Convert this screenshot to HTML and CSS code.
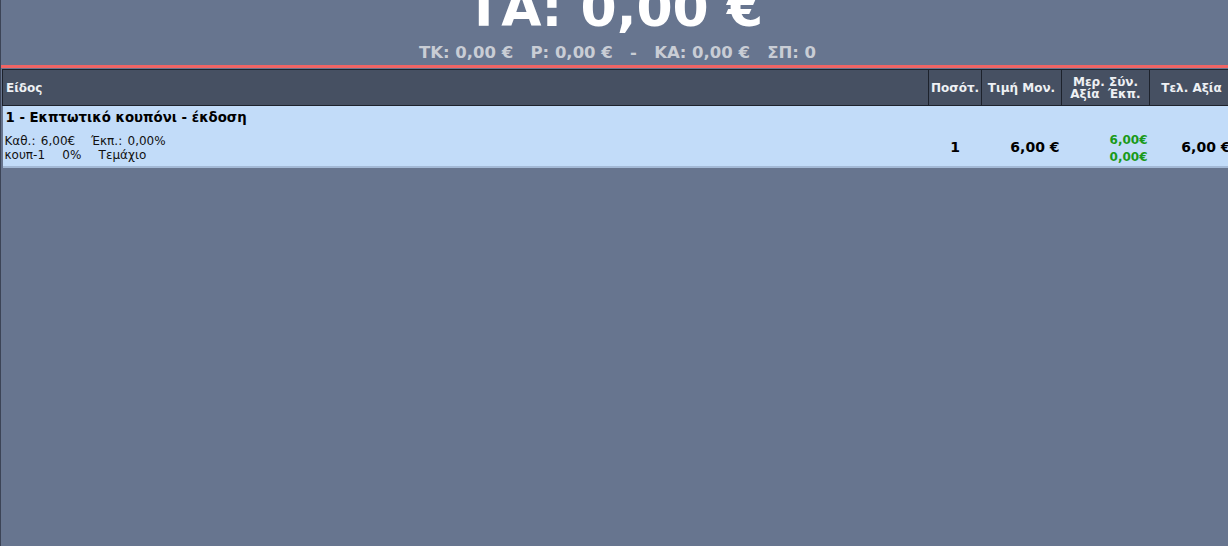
FILE: index.html
```html
<!DOCTYPE html>
<html lang="el">
<head>
<meta charset="utf-8">
<title>Ταμείο</title>
<link rel="stylesheet" href="styles.css">
</head>
<body>
<div class="screen">
  <header class="totals">
    <div class="grand">ΤΑ: 0,00 €</div>
    <div class="sub">ΤΚ: 0,00 €&nbsp;&nbsp;&nbsp;Ρ: 0,00 €&nbsp;&nbsp;&nbsp;-&nbsp;&nbsp;&nbsp;ΚΑ: 0,00 €&nbsp;&nbsp;&nbsp;ΣΠ: 0</div>
  </header>
  <div class="redbar"></div>
  <table class="items">
    <thead>
      <tr>
        <th class="c-item">Είδος</th>
        <th class="c-qty">Ποσότ.</th>
        <th class="c-price">Τιμή Μον.</th>
        <th class="c-sum">Μερ. Σύν.<br>Αξία&nbsp;&nbsp;Έκπ.</th>
        <th class="c-total">Τελ. Αξία</th>
      </tr>
    </thead>
    <tbody>
      <tr class="row">
        <td class="c-item">
          <div class="name">1 - Εκπτωτικό κουπόνι - έκδοση</div>
          <div class="meta">Καθ.: 6,00€&nbsp;&nbsp;&nbsp;Έκπ.: 0,00%</div>
          <div class="meta tight">κουπ-1&nbsp;&nbsp;&nbsp;&nbsp;0%&nbsp;&nbsp;&nbsp;&nbsp;Τεμάχιο</div>
        </td>
        <td class="c-qty num">1</td>
        <td class="c-price num">6,00 €</td>
        <td class="c-sum num green">6,00€<br>0,00€</td>
        <td class="c-total num">6,00 €</td>
      </tr>
    </tbody>
  </table>
</div>
</body>
</html>
```
FILE: styles.css
```css
html, body {
  margin: 0;
  padding: 0;
  height: 100%;
}
body {
  background: #67758f;
  font-family: "DejaVu Sans", Verdana, sans-serif;
  overflow: hidden;
}
.screen {
  height: 100%;
  border-left: 1px solid #3c4456;
  box-sizing: border-box;
}
.totals {
  height: 65px;
  overflow: hidden;
  display: flex;
  flex-direction: column;
  align-items: center;
}
.grand {
  color: #ffffff;
  font-weight: bold;
  font-size: 52px;
  line-height: 52px;
  margin-top: -18px;
}
.sub {
  color: #c9cdd5;
  font-weight: bold;
  font-size: 16.5px;
  line-height: 20px;
  margin-top: 9px;
  margin-left: 6px;
}
.redbar {
  height: 3px;
  background: #f06464;
  margin-bottom: 1px;
}
.items {
  margin-left: 1px;
  width: calc(100% + 5px);
  border-collapse: collapse;
  table-layout: fixed;
}
.items th, .items td {
  box-sizing: border-box;
}
.items th {
  background: #465062;
  color: #eef0f4;
  font-size: 12px;
  font-weight: bold;
  height: 36px;
  padding: 0 2px;
  border: 1px solid #1d222c;
  text-align: center;
  line-height: 12px;
}
.items th.c-item { text-align: left; padding-left: 3px; }
.c-qty { width: 53px; }
.c-price { width: 80px; }
.c-sum { width: 88px; }
.c-total { width: 84px; }
.row td {
  background: #c2dcf9;
  border-bottom: 2px solid #a3b9d6;
  vertical-align: top;
  padding: 4px 3px 0 3px;
  height: 61px;
}
.name {
  font-size: 13.3px;
  line-height: 16px;
  font-weight: bold;
  color: #000;
  margin-bottom: 8px;
}
.meta {
  font-size: 12px;
  color: #111;
  line-height: 14px;
  word-spacing: 1.5px;
  margin-left: -1px;
}
.meta.tight { word-spacing: 0.5px; }
.row td.num {
  text-align: center;
  font-size: 14px;
  line-height: 14px;
  font-weight: bold;
  color: #000;
  padding-top: 34px;
}
.row td.c-price { text-align: right; padding-right: 2px; }
.row td.c-total { text-align: right; padding-right: 3px; }
.row td.green {
  color: #1a9a1a;
  font-size: 12px;
  line-height: 17px;
  padding-top: 26px;
  text-align: right;
  padding-right: 2px;
}
```
